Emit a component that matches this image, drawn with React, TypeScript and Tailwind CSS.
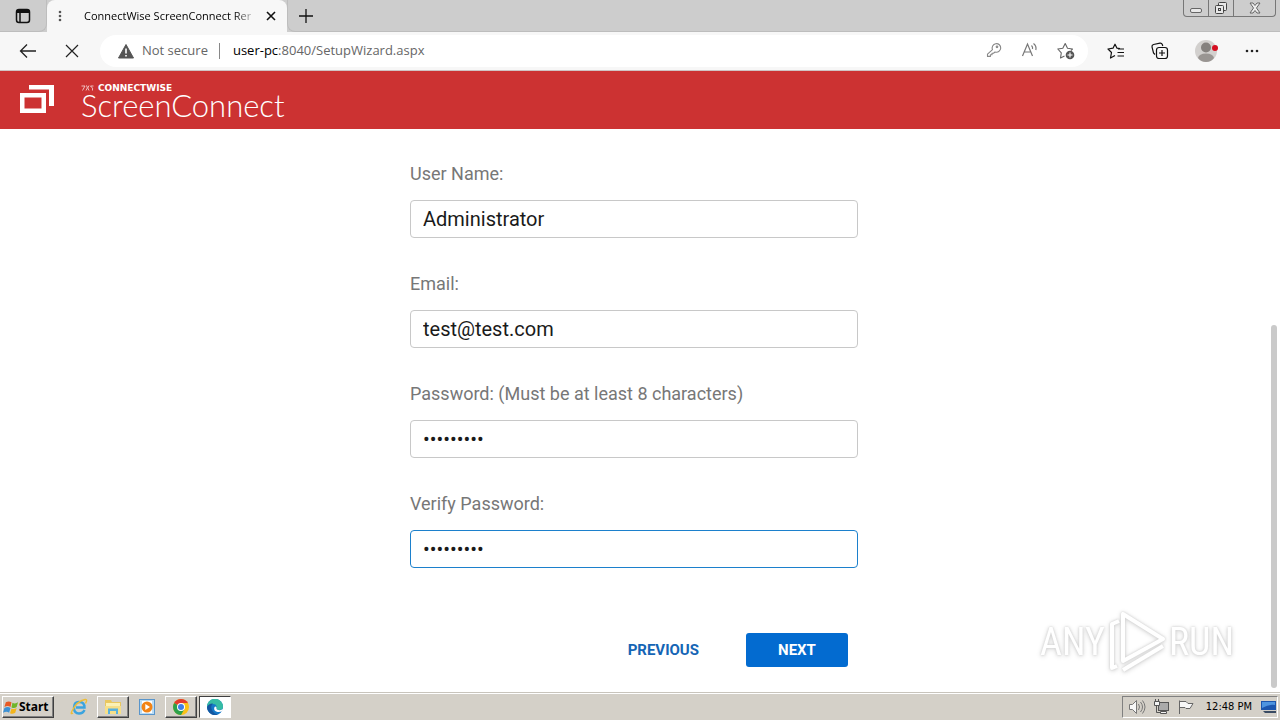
import React, { useState } from "react";

type FieldProps = {
  id: string;
  label: string;
  type?: string;
  value: string;
  active?: boolean;
  onChange: (v: string) => void;
};

function Field({ id, label, type = "text", value, active = false, onChange }: FieldProps) {
  return (
    <div className="flex flex-col gap-[14px]">
      <label htmlFor={id} className="text-[18px] leading-6 text-[#777777]">
        {label}
      </label>
      <input
        id={id}
        type={type}
        value={value}
        onChange={(e) => onChange(e.target.value)}
        className={
          "h-[38px] w-full rounded-[4px] border bg-white px-3 text-[20px] text-[#1a1a1a] outline-none " +
          (active ? "border-[#1c80cc]" : "border-[#c8c8c8]")
        }
      />
    </div>
  );
}

function TabStrip() {
  return (
    <div className="flex h-8 items-stretch bg-[#cdcdcd]">
      <button aria-label="Tab actions" className="flex w-[47px] items-center justify-center rounded-br-lg border-r border-b border-[#bdbdbd]">
        <svg width="16" height="16" viewBox="0 0 16 16" fill="none" stroke="#111" strokeWidth="1.5">
          <rect x="1.5" y="1.5" width="13" height="13" rx="2.5" />
          <path d="M2 3.500h12" strokeWidth="3" />
          <path d="M5 4v10" />
        </svg>
      </button>
      <div className="flex w-[240px] items-center rounded-t-lg bg-[#f7f7f7] pr-[11px]">
        <svg className="ml-2 shrink-0" width="10" height="14" viewBox="0 0 10 14" fill="#555">
          <circle cx="5" cy="3" r="1.3" />
          <circle cx="5" cy="7" r="1.3" />
          <circle cx="5" cy="11" r="1.3" />
        </svg>
        <span className="ml-[19px] bg-linear-to-r from-black from-88% to-[#bbbbbb] bg-clip-text font-['Open_Sans',sans-serif] text-[11px] whitespace-nowrap text-transparent">
          ConnectWise ScreenConnect Rer
        </span>
        <button aria-label="Close tab" className="ml-auto">
          <svg width="10" height="10" viewBox="0 0 10 10" stroke="#111" strokeWidth="1.6">
            <path d="M1 1l8 8M9 1l-8 8" />
          </svg>
        </button>
      </div>
      <button aria-label="New tab" className="flex w-9 items-center justify-center rounded-bl-lg border-b border-l border-[#bdbdbd]">
        <svg width="14" height="14" viewBox="0 0 14 14" stroke="#111" strokeWidth="1.3">
          <path d="M7 0v14M0 7h14" />
        </svg>
      </button>
      <div className="flex flex-1 items-start justify-end border-b border-[#bdbdbd] pr-1">
        <div className="flex h-[17px] rounded-b border border-t-0 border-[#777]">
          <button aria-label="Minimize" className="flex w-[25px] items-center justify-center border-r border-[#777]">
            <svg width="12" height="16" viewBox="0 0 12 16" fill="#e8e8e8" stroke="#666">
              <rect x=".5" y="8.5" width="11" height="4" rx="1.5" />
            </svg>
          </button>
          <button aria-label="Restore" className="flex w-[25px] items-center justify-center border-r border-[#777]">
            <svg width="14" height="14" viewBox="0 0 14 14" fill="#e8e8e8" stroke="#444">
              <rect x="4.500" y="1.500" width="8" height="8" rx="1" />
              <rect x="1.500" y="4.500" width="8" height="8" rx="1" />
              <rect x="4.500" y="7.500" width="2" height="2" />
            </svg>
          </button>
          <button aria-label="Close window" className="flex w-[41px] items-center justify-center">
            <svg width="12" height="12" viewBox="0 0 12 12" fill="#eee" stroke="#666">
              <path d="M1 1h3l2 2.500 2-2.500h3l-3.500 5 3.500 5h-3l-2-2.500-2 2.500h-3l3.500-5z" />
            </svg>
          </button>
        </div>
      </div>
    </div>
  );
}

function Toolbar() {
  return (
    <div className="flex h-[39px] items-center border-b border-[#d0c4c4] bg-[#f7f7f7] px-4">
      <button aria-label="Back" className="flex w-6 justify-center">
        <svg width="18" height="16" viewBox="0 0 18 16" fill="none" stroke="#222" strokeWidth="1.300">
          <path d="M8 1.500L1.500 8 8 14.500M1.500 8H17" />
        </svg>
      </button>
      <button aria-label="Stop" className="ml-5 flex w-6 justify-center">
        <svg width="14" height="14" viewBox="0 0 14 14" stroke="#222" strokeWidth="1.200">
          <path d="M1 1l12 12M13 1L1 13" />
        </svg>
      </button>
      <div className="mx-4 flex h-8 flex-1 items-center rounded-full bg-white pr-[10px] pl-[18px] font-['Open_Sans',sans-serif] text-[13px] text-[#666]">
        <svg width="16" height="15" viewBox="0 0 16 15">
          <path d="M8 .5L15.500 14H.5z" fill="#555" stroke="#555" strokeLinejoin="round" />
          <path d="M8 4.500v5M8 11v1.600" stroke="#fff" strokeWidth="1.600" />
        </svg>
        <span className="ml-2">Not secure</span>
        <span className="ml-[11px] h-4 w-px bg-[#888]" />
        <span className="ml-[13px]">
          <span className="text-black">user-pc</span>:8040/SetupWizard.aspx
        </span>
        <div className="ml-auto flex gap-3">
          <button aria-label="Saved password" className="flex w-6 justify-center">
            <svg width="16" height="16" viewBox="0 0 16 16" fill="none" stroke="#888" strokeWidth="1.100" strokeLinejoin="round">
              <path d="M6.500 7.700A4.300 4.300 0 1 1 9 10L7.500 11.200H6v1.600H4.400v1.600H1.500v-2.300z" />
              <circle cx="11" cy="4.800" r=".8" />
            </svg>
          </button>
          <button aria-label="Read aloud" className="flex w-6 justify-center">
            <svg width="18" height="16" viewBox="0 0 18 16" fill="none" stroke="#777" strokeWidth="1.200">
              <path d="M1.500 14L6.500 2l5 12M3.200 10h6.600" />
              <path d="M10.500 3.500q1.500 1.500 1 3.500M12.500 1.500q3.300 2.500 2.300 6.500" />
            </svg>
          </button>
          <button aria-label="Add favorite" className="flex w-6 justify-center">
            <svg width="18" height="18" viewBox="0 0 18 18" fill="none" stroke="#666" strokeWidth="1.100" strokeLinejoin="round">
              <path d="M7.500 14L3.500 16l.8-5.200L.8 7l5-.8L8.200 1.500l2.300 4.700 5 .8-1.500 1.500" />
              <circle cx="13" cy="13" r="4.300" fill="#555" stroke="none" />
              <path d="M13 10.500v5M10.500 13h5" stroke="#fff" />
            </svg>
          </button>
        </div>
      </div>
      <div className="flex items-center gap-5">
        <button aria-label="Favorites" className="flex w-6 justify-center">
          <svg width="18" height="17" viewBox="0 0 18 17" fill="none" stroke="#111" strokeWidth="1.200" strokeLinejoin="round">
            <path d="M8 12.500L3.500 15l1-5.500L1 6l5-.8L8 1.200l2 4 3 .5M11 6h6M10.500 9.500H17M10.500 13H17" />
          </svg>
        </button>
        <button aria-label="Collections" className="flex w-6 justify-center">
          <svg width="18" height="18" viewBox="0 0 18 18" fill="none" stroke="#111" strokeWidth="1.200">
            <path d="M4 12.500L2.500 11 1 5q-.3-2 1.500-2.500l6.500-1.300q1.700-.2 2.300 1.300l.5 1.500" />
            <rect x="5.500" y="5.500" width="11" height="11" rx="2.500" />
            <path d="M11 8v6M8 11h6" />
          </svg>
        </button>
        <button aria-label="Profile" className="flex w-7 justify-center">
          <svg width="24" height="24" viewBox="0 0 24 24">
            <circle cx="12" cy="12" r="11" fill="#d2d0ce" />
            <circle cx="12" cy="8.500" r="5" fill="#85817e" />
            <path d="M4 19q1-4.500 8-4.500t8 4.500q-3 4-8 4t-8-4z" fill="#999592" />
            <circle cx="21" cy="9" r="3" fill="#d50e20" />
          </svg>
        </button>
        <button aria-label="Settings and more" className="flex w-6 justify-center">
          <svg width="14" height="4" viewBox="0 0 14 4" fill="#222">
            <circle cx="2" cy="2" r="1.300" />
            <circle cx="7" cy="2" r="1.300" />
            <circle cx="12" cy="2" r="1.300" />
          </svg>
        </button>
      </div>
    </div>
  );
}

function Brand() {
  return (
    <header className="flex h-[58px] items-center bg-[#cc3232] pl-5 text-white">
      <svg width="34" height="30" viewBox="0 0 34 30" fill="#fff" fillRule="evenodd">
        <path d="M0 8h26v20H0zM4.500 12.500v11h17v-11z" />
        <path d="M9 0h25v21h-5V4.500H9z" />
      </svg>
      <div className="ml-[27px] flex flex-col pt-[2px]">
        <div className="flex h-2 items-center gap-1">
          <svg width="13" height="6" viewBox="0 0 13 6" fill="none" stroke="#fff" strokeWidth=".8" opacity=".85">
            <path d="M.5 1H4L1.500 5.500M5 .5q2.500 1 0 5M8 .5q-2.500 2.500 0 5M12.500 1H9.500q3 2 2 4.500" />
          </svg>
          <span className="font-['DejaVu_Sans',sans-serif] text-[9px] leading-[8px] font-bold">CONNECTWISE</span>
        </div>
        <span className="font-['Lato',sans-serif] text-[31px] leading-[26px] font-light">ScreenConnect</span>
      </div>
    </header>
  );
}

function Watermark() {
  return (
    <div className="pointer-events-none absolute right-[46px] bottom-[18px] flex items-center gap-[2px] font-['Roboto_Condensed','Liberation_Sans_Narrow','Roboto',sans-serif] text-[38px] leading-[64px] text-white [filter:drop-shadow(0_0_1px_#d0d0d0)_drop-shadow(0_1px_2px_#d8d8d8)]">
      <span>ANY</span>
      <svg width="60" height="64" viewBox="0 0 60 64" fill="none" stroke="#fff" strokeWidth="4" strokeLinejoin="round">
        <path d="M16 4v47l40-22zM12 11l-7 3v44l5-2M16 60l40-24" />
      </svg>
      <span>RUN</span>
    </div>
  );
}

const bevel = "border border-t-white border-l-white border-r-[#404040] border-b-[#404040] shadow-[inset_-1px_-1px_0_#808080]";

function Taskbar() {
  return (
    <footer className="flex h-7 items-end border-t border-[#c8c4bc] bg-[#d4d0c8] px-[2px] pb-[2px] font-['DejaVu_Sans_Condensed','DejaVu_Sans',sans-serif] text-black shadow-[inset_0_1px_0_#ffffff]">
      <button className={"flex h-[22px] w-[52px] items-center " + bevel}>
        <svg width="16" height="17" viewBox="0 0 17 17">
          <path d="M3 3q3-2 6 0L8 8Q5 6 1.500 8z" fill="#e85a24" />
          <path d="M10 3.500q3 1.500 6-.5l-1.500 5Q12 10 9 8.500z" fill="#70b52b" />
          <path d="M1.500 9Q5 7 8 9l-1.500 5Q4 12 0 14z" fill="#3d91d4" />
          <path d="M9 9.500q3 1.500 5.500-.5L13 14q-3 2-5.500.5z" fill="#f3b51c" />
        </svg>
        <span className="font-['Noto_Sans',sans-serif] text-[12px] font-bold">Start</span>
      </button>
      <button aria-label="Internet Explorer" className="ml-[9px] flex h-[22px] w-8 items-center justify-center">
        <svg width="18" height="18" viewBox="0 0 18 18" fill="none">
          <path d="M14.500 12q-1.500 3.500-5.500 3.500-5 0-5-6T9.500 4q5 0 5 5.500H6" stroke="#3ba4df" strokeWidth="2.400" />
          <path d="M3 15q-3 2-1-2Q7 3 15 1.500q3-.5.5 4" stroke="#edbd37" strokeWidth="1.400" />
        </svg>
      </button>
      <button aria-label="File Explorer" className={"ml-[2px] flex h-[22px] w-8 items-center justify-center " + bevel}>
        <svg width="18" height="16" viewBox="0 0 18 16">
          <path d="M1 1h6l1 2h9v12H1z" fill="#e9c75f" />
          <path d="M2 4h14v4H2z" fill="#fbf1b5" />
          <path d="M1 7h16v8H1z" fill="#f6df88" />
          <path d="M4 15V9.500h10V15h-2v-3H6v3z" fill="#58b1de" />
        </svg>
      </button>
      <button aria-label="Media Player" className="ml-[2px] flex h-[22px] w-8 items-center justify-center">
        <svg width="16" height="16" viewBox="0 0 16 16">
          <rect x=".5" y=".5" width="15" height="15" fill="#b9dcf5" stroke="#5995cb" />
          <rect x="3" y="2" width="10" height="12" fill="#fff" />
          <circle cx="8" cy="8" r="5.500" fill="#f28416" />
          <path d="M6.300 5v6l4.700-3z" fill="#fff" />
        </svg>
      </button>
      <button aria-label="Chrome" className={"ml-[2px] flex h-[22px] w-8 items-center justify-center " + bevel}>
        <svg width="16" height="16" viewBox="0 0 16 16">
          <circle cx="8" cy="8" r="8" fill="#fbc116" />
          <path d="M8 8L1.100 4A8 8 0 0 1 14.900 4z" fill="#e33b2e" />
          <path d="M8 8L1.100 4A8 8 0 0 0 8 16l3.500-6z" fill="#2da14c" />
          <path d="M8 4h6.900L11.500 10z" fill="#fbc116" />
          <circle cx="8" cy="8" r="4" fill="#fff" />
          <circle cx="8" cy="8" r="3" fill="#3f7ee8" />
        </svg>
      </button>
      <button aria-label="Edge" className="ml-[2px] flex h-[22px] w-8 items-center justify-center border border-t-[#404040] border-r-white border-b-white border-l-[#404040] bg-white">
        <svg width="16" height="16" viewBox="0 0 16 16">
          <circle cx="8" cy="8" r="8" fill="#1478c8" />
          <path d="M0 8A8 8 0 0 1 16 7.500q0 3.500-4 3.500-3 0-2.500-2Q10 5 6 5 2 5 0 8z" fill="#36bca4" />
          <path d="M0 8q2-4 6-3.500Q3 7 5 11t6 4.500Q8 16.500 5 15.500 0 13 0 8z" fill="#1457a0" />
          <path d="M7.500 8q-1.500 4 3 5 3 .3 5-1l.5-2q-2 1.500-4.500 1-2.500-.5-2-2.500-1-1.500-2-.5z" fill="#fff" />
        </svg>
      </button>
      <div className="ml-auto flex h-[22px] items-center border border-t-[#808080] border-r-white border-b-white border-l-[#808080] pl-[5px]">
        <svg width="18" height="16" viewBox="0 0 18 16" fill="none" stroke="#777">
          <path d="M1.500 5.500h3l4-4v13l-4-4h-3z" fill="#f7f7f7" />
          <path d="M10.500 5q2 3 0 6M12.500 3q4 5 0 10M14.500 1.500q5 6.500 0 13" />
        </svg>
        <svg className="ml-[7px]" width="17" height="16" viewBox="0 0 17 16" fill="#f4f4f4" stroke="#555">
          <rect x="5.500" y="3.500" width="10" height="8" fill="#aaa" />
          <path d="M7.500 12.500h6v2h-6z" />
          <path d="M1.500 2.500h5v4h-5zM2.500 0v2M5.500 0v2" />
          <path d="M3.500 6.500v7H7" fill="none" />
        </svg>
        <svg className="ml-[7px]" width="17" height="16" viewBox="0 0 17 16" fill="#f7f7f7" stroke="#666">
          <path d="M2.500 15V1.500M3 2.500h6l2 2h5l-3 5H9l-1-1H3" />
        </svg>
        <span className="ml-3 text-[11px]">12:48 PM</span>
        <svg className="ml-2" width="17" height="16" viewBox="0 0 17 16">
          <path d="M1 2h15v9H1z" fill="#1c55ad" />
          <path d="M2 3h13v3Q9 5 2 9z" fill="#4e94df" />
          <path d="M3 12h13v2H5z" fill="#394b63" />
        </svg>
      </div>
    </footer>
  );
}

export default function App() {
  const [userName, setUserName] = useState("Administrator");
  const [email, setEmail] = useState("test@test.com");
  const [password, setPassword] = useState("password1");
  const [verify, setVerify] = useState("password1");

  return (
    <div className="flex min-h-screen flex-col bg-white font-['Roboto',sans-serif]">
      <TabStrip />
      <Toolbar />
      <Brand />
      <main className="relative flex flex-1">
        <form className="mx-auto flex w-full max-w-[448px] flex-col gap-[34px] pt-[33px]" onSubmit={(e) => e.preventDefault()}>
          <Field id="user" label="User Name:" value={userName} onChange={setUserName} />
          <Field id="email" label="Email:" value={email} onChange={setEmail} />
          <Field id="password" label="Password: (Must be at least 8 characters)" type="password" value={password} onChange={setPassword} />
          <Field id="verify" label="Verify Password:" type="password" value={verify} onChange={setVerify} active />
          <div className="mt-[31px] flex justify-end gap-8 pr-[10px] text-[15px] font-bold">
            <button type="button" className="h-[34px] px-[15px] text-[#1565b5]">
              PREVIOUS
            </button>
            <button type="submit" className="h-[34px] w-[102px] rounded-[3px] bg-[#036bd0] text-white">
              NEXT
            </button>
          </div>
        </form>
        {/* scrollbar */}
        <div className="flex w-3 flex-col items-center justify-end pb-1">
          <div className="h-[65%] w-[6px] rounded-full bg-[#cacaca]" />
        </div>
        <Watermark />
      </main>
      <Taskbar />
    </div>
  );
}
